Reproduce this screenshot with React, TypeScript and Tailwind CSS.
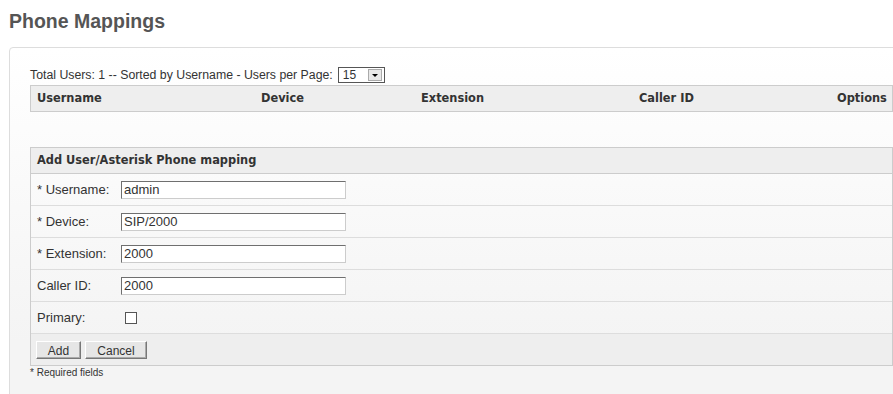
import React, { useState } from 'react';

const fields = [
    { label: '* Username:', value: 'admin' },
    { label: '* Device:', value: 'SIP/2000' },
    { label: '* Extension:', value: '2000' },
    { label: 'Caller ID:', value: '2000' },
];

const App: React.FC = () => {
    const [values, setValues] = useState(fields.map((f) => f.value));
    const [primary, setPrimary] = useState(false);

    return (
        <div className="w-[893px] h-[394px] overflow-hidden bg-white font-['Liberation_Sans',Arial,sans-serif] text-[#333]">
            <h1 className="pl-[9px] pt-[9px] h-[47px] text-[19.5px] leading-[24px] font-bold text-[#555]">Phone Mappings</h1>

            <div className="ml-[9px] w-[904px] h-[370px] border border-[#ddd] rounded-[4px] bg-[linear-gradient(#fff,#f4f4f4_80%)] pl-5 pt-[19px]">
                {/* Listing */}
                <div className="flex items-center h-[16px] text-[12.3px]">
                    <span>Total Users: 1 -- Sorted by Username - Users per Page:</span>
                    <div className="ml-[5px] w-[47px] h-[16px] border border-[#555] bg-white flex items-center">
                        <span className="pl-[4px] flex-1 text-[12px] leading-none">15</span>
                        <span className="w-[14px] h-[12px] mr-[2px] border border-[#aaa] bg-[#e8e8e8] flex items-center justify-center">
                            <span className="w-0 h-0 border-l-[3px] border-r-[3px] border-t-[3px] border-l-transparent border-r-transparent border-t-black" />
                        </span>
                    </div>
                </div>
                <div className="mt-[2px] w-[863px] h-[27px] border border-[#ccc] bg-[#eee] grid grid-cols-[224px_160px_218px_198px_1fr] items-center font-['DejaVu_Sans',Verdana,sans-serif] font-bold text-[11.4px]">
                    <div className="pl-[6px]">Username</div>
                    <div className="pl-[6px]">Device</div>
                    <div className="pl-[6px]">Extension</div>
                    <div className="pl-[6px]">Caller ID</div>
                    <div className="pl-[6px]">Options</div>
                </div>

                {/* Add form */}
                <div className="mt-[35px] w-[863px] border-l border-r border-[#ccc]">
                    <div className="h-[27px] border-t border-b border-[#ccc] bg-[#eee] flex items-center pl-[6px] font-['DejaVu_Sans',Verdana,sans-serif] font-bold text-[11.4px]">
                        Add User/Asterisk Phone mapping
                    </div>
                    {fields.map((f, i) => (
                        <div key={f.label} className="h-[32px] border-b border-[#ddd] flex items-center pl-[6px] text-[13px]">
                            <span className="w-[84px]">{f.label}</span>
                            <input
                                type="text"
                                value={values[i]}
                                onChange={(e) => setValues(values.map((v, j) => (j === i ? e.target.value : v)))}
                                className="w-[225px] h-[18px] bg-white border border-t-[#6f6f6f] border-l-[#6f6f6f] border-r-[#ccc] border-b-[#ccc] px-[2px] text-[13px] outline-none"
                            />
                        </div>
                    ))}
                    <div className="h-[32px] border-b border-[#ddd] flex items-center pl-[6px] text-[13px]">
                        <span className="w-[88px]">Primary:</span>
                        <button
                            type="button"
                            onClick={() => setPrimary(!primary)}
                            className="w-[12px] h-[12px] border border-[#555] bg-white text-[9px] leading-none"
                        >
                            {primary ? '✓' : ''}
                        </button>
                    </div>
                    <div className="h-[32px] border-b border-[#ccc] bg-[#eee] flex items-center gap-[4px] pl-[5px] text-[12px]">
                        <button className="w-[45px] h-[18px] bg-[#e6e6e6] border border-t-[#fff] border-l-[#fff] border-r-[#777] border-b-[#777] shadow-[inset_-1px_-1px_0_#aaa]">Add</button>
                        <button className="w-[62px] h-[18px] bg-[#e6e6e6] border border-t-[#fff] border-l-[#fff] border-r-[#777] border-b-[#777] shadow-[inset_-1px_-1px_0_#aaa]">Cancel</button>
                    </div>
                </div>
                <div className="text-[10px] leading-[13px]">* Required fields</div>
            </div>
        </div>
    );
};

export default App;
